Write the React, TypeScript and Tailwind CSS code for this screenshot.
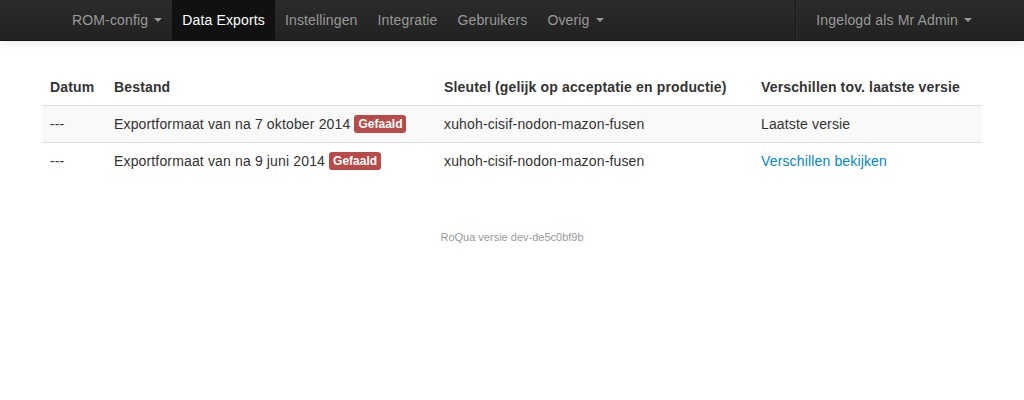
import React from 'react';

const navItems = [
  { label: 'ROM-config', caret: true },
  { label: 'Data Exports', active: true },
  { label: 'Instellingen' },
  { label: 'Integratie' },
  { label: 'Gebruikers' },
  { label: 'Overig', caret: true },
];

const rows = [
  {
    datum: '---',
    bestand: 'Exportformaat van na 7 oktober 2014',
    sleutel: 'xuhoh-cisif-nodon-mazon-fusen',
    verschil: 'Laatste versie',
    link: false,
  },
  {
    datum: '---',
    bestand: 'Exportformaat van na 9 juni 2014',
    sleutel: 'xuhoh-cisif-nodon-mazon-fusen',
    verschil: 'Verschillen bekijken',
    link: true,
  },
];

function Caret() {
  return (
    <span className="ml-[6px] inline-block h-0 w-0 border-x-[4px] border-t-[4px] border-x-transparent border-t-[#999] align-middle" />
  );
}

export default function App() {
  return (
    <div
      className="min-h-[400px] bg-white text-[14px] leading-5 tracking-[0.15px] text-[#333]"
      style={{ fontFamily: '"Liberation Sans", Arial, sans-serif' }}
    >
      {/* Navbar */}
      <div className="h-[41px] border-b border-[#111] bg-gradient-to-b from-[#2b2b2b] to-[#222] shadow-[0_1px_10px_rgba(0,0,0,0.1)]">
        <div className="mx-auto flex h-10 w-[940px] justify-between">
          <ul className="ml-[20px] flex">
            {navItems.map(item => (
              <li key={item.label}>
                <a
                  className={`flex h-10 items-center px-[10px] ${
                    item.active ? 'bg-[#111] text-white' : 'text-[#999]'
                  }`}
                >
                  {item.label}
                  {item.caret && <Caret />}
                </a>
              </li>
            ))}
          </ul>
          <div className="flex">
            <div className="mr-[9px] h-10 border-l border-r border-l-[#1a1a1a] border-r-[#2e2e2e]" />
            <a className="flex h-10 items-center px-[10px] text-[#999]">
              Ingelogd als Mr Admin
              <Caret />
            </a>
          </div>
        </div>
      </div>

      {/* Content */}
      <div className="mx-auto w-[940px] pt-[28px]">
        <table className="w-full border-collapse">
          <thead>
            <tr className="text-left font-bold">
              <th className="w-[64px] p-2 align-bottom">Datum</th>
              <th className="w-[330px] p-2 align-bottom">Bestand</th>
              <th className="w-[317px] p-2 align-bottom">Sleutel (gelijk op acceptatie en productie)</th>
              <th className="p-2 align-bottom">Verschillen tov. laatste versie</th>
            </tr>
          </thead>
          <tbody>
            {rows.map((row, i) => (
              <tr key={i} className={`border-t border-[#ddd] ${i % 2 === 0 ? 'bg-[#f9f9f9]' : ''}`}>
                <td className="p-2">{row.datum}</td>
                <td className="p-2">
                  {row.bestand}{' '}
                  <span className="rounded-[3px] bg-[#b94a48] px-[4px] py-[2px] align-[1px] text-[12px] font-bold leading-[14px] tracking-normal text-white">
                    Gefaald
                  </span>
                </td>
                <td className="p-2">{row.sleutel}</td>
                <td className="p-2">
                  {row.link ? <a className="text-[#0088cc]">{row.verschil}</a> : row.verschil}
                </td>
              </tr>
            ))}
          </tbody>
        </table>

        <div className="mt-[48px] text-center text-[11px] tracking-normal text-[#999]">RoQua versie dev-de5c0bf9b</div>
      </div>
    </div>
  );
}
